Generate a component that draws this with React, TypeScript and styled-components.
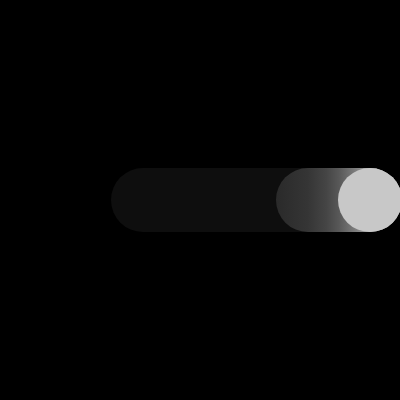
import React from 'react'
import styled, { createGlobalStyle } from 'styled-components'

const GlobalStyle = createGlobalStyle`
    html,
    body {
        margin: 0;
        padding: 0;
        background: #000000;
        overflow: hidden;
        font-family: 'Liberation Sans', Arial, sans-serif;
    }
`

function App() {
    return (
        <Page>
            <GlobalStyle />
            <Track role="switch" aria-checked="true">
                <Trail>
                    <Knob />
                </Trail>
            </Track>
        </Page>
    )
}

export default App

const Page = styled.div`
    width: 400px;
    height: 400px;
    display: flex;
    align-items: center;
    padding-left: 111px;
    box-sizing: border-box;
`
const Track = styled.div`
    flex: 0 0 291px;
    height: 64px;
    border-radius: 32px;
    background: #0e0e0e;
    display: flex;
    justify-content: flex-end;
`
const Trail = styled.div`
    flex: 0 0 126px;
    height: 64px;
    border-radius: 32px;
    background: linear-gradient(90deg, #2a2a2a 0%, #353535 25%, #454545 40%, #585858 50%, #7a7a7a 62%, #b4b4b4 80%, #c4c4c4 100%);
    display: flex;
    justify-content: flex-end;
    align-items: center;
`
const Knob = styled.div`
    width: 64px;
    height: 64px;
    border-radius: 50%;
    background: #c8c8c8;
`
